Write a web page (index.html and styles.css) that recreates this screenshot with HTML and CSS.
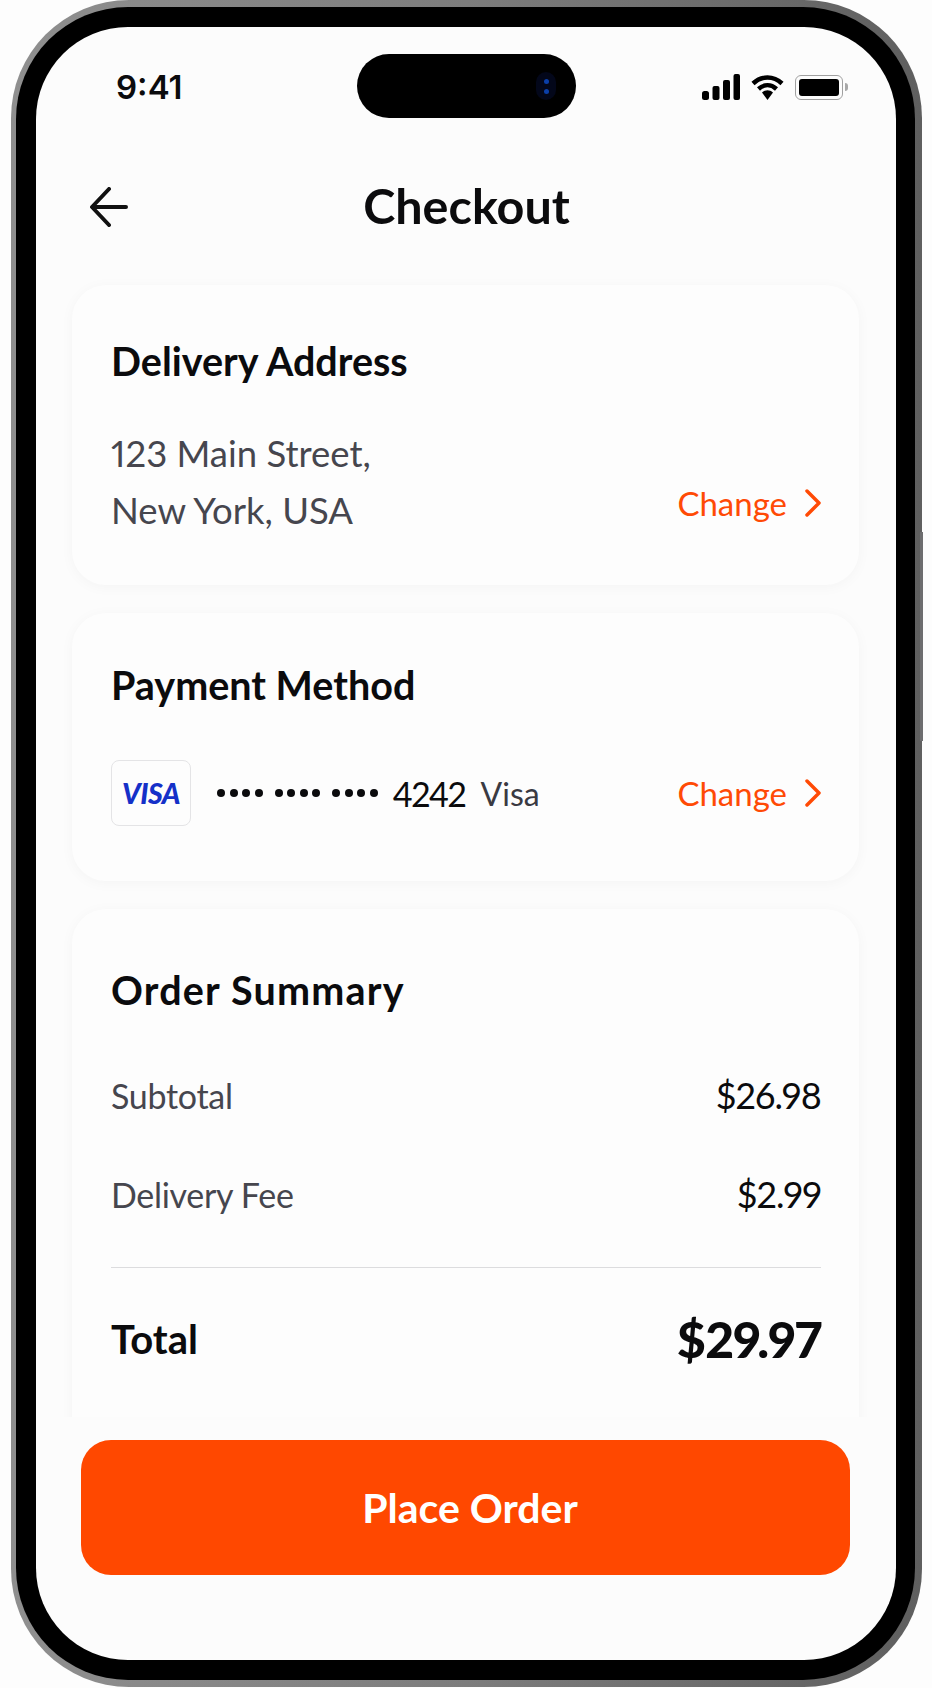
FILE: index.html
```html
<!DOCTYPE html>
<html lang="en">

<head>
  <meta charset="UTF-8" />
  <meta name="viewport" content="width=device-width, initial-scale=1.0" />
  <title>Checkout</title>
  <link rel="stylesheet" href="styles.css">
</head>

<body>
  <div class="phone">
    <span class="side-btn side-right"></span>
    <div class="bezel">
      <div class="screen">
        <div class="island">
          <span class="camera"><i></i><i></i></span>
        </div>

        <div class="status-bar">
          <span class="time">9:41</span>
          <div class="status-icons">
            <svg width="38" height="26" viewBox="0 0 38 26">
              <rect x="0" y="17" width="7" height="9" rx="2.5" />
              <rect x="10.500" y="12" width="7" height="14" rx="2" />
              <rect x="21" y="6" width="7" height="20" rx="2" />
              <rect x="31.500" y="0" width="6.500" height="26" rx="2" />
            </svg>
            <svg width="33" height="27" viewBox="0 0 33 27">
              <path class="wifi-arc" d="M2 9.500C10.500 1.500 22.500 1.500 31 9.500" />
              <path class="wifi-arc" d="M7.500 15C13 10 20 10 25.500 15" />
              <path d="M11 18.500C14.500 15.500 18.500 15.500 22 18.500L16.500 26Z" />
            </svg>
            <div class="battery"><span class="battery-level"></span></div>
          </div>
        </div>

        <header class="top-bar">
          <svg class="back-icon" width="38" height="40" viewBox="0 0 38 40">
            <path d="M19 2L2 20L19 38M2.500 20H36" />
          </svg>
          <h1>Checkout</h1>
        </header>

        <main class="content">
          <section class="card card-address">
            <h2>Delivery Address</h2>
            <div class="card-row row-end">
              <p class="address">123 Main Street,<br>New York, USA</p>
              <a class="change-link" href="#">Change
                <svg width="16" height="28" viewBox="0 0 16 28">
                  <path d="M2 2L14 14L2 26" />
                </svg>
              </a>
            </div>
          </section>

          <section class="card card-payment">
            <h2>Payment Method</h2>
            <div class="card-row">
              <div class="visa-box">VISA</div>
              <div class="dots">
                <span></span><span></span><span></span><span></span>
                <span class="dot-gap"></span>
                <span></span><span></span><span></span><span></span>
                <span class="dot-gap"></span>
                <span></span><span></span><span></span><span></span>
              </div>
              <span class="card-num">4242</span>
              <span class="card-brand">Visa</span>
              <a class="change-link push-right" href="#">Change
                <svg width="16" height="28" viewBox="0 0 16 28">
                  <path d="M2 2L14 14L2 26" />
                </svg>
              </a>
            </div>
          </section>

          <section class="card card-summary">
            <h2>Order Summary</h2>
            <div class="sum-row"><span>Subtotal</span><strong>$26.98</strong></div>
            <div class="sum-row"><span>Delivery Fee</span><strong>$2.99</strong></div>
            <div class="sum-total"><span>Total</span><strong>$29.97</strong></div>
          </section>
        </main>

        <footer class="bottom-bar">
          <button type="button">Place Order</button>
        </footer>
      </div>
    </div>
  </div>
</body>

</html>
```

FILE: styles.css
```css
body {
  margin: 0;
  background-color: #fdfdfd;
  font-family: Lato, 'Noto Sans', sans-serif;
  font-variant-numeric: proportional-nums;
  color: #0b0b0d;
}

.phone {
  position: relative;
  width: 911px;
  height: 1687px;
  margin-left: 11px;
  padding: 7px 7px 7px 5px;
  box-sizing: border-box;
  border-radius: 118px;
  background: linear-gradient(90deg, #8f8f8f, #7d7d7d 50%, #5f5f5f);
}

.side-btn {
  position: absolute;
  width: 3px;
  background-color: #6d6d6f;
}

.side-right {
  top: 532px;
  right: -1px;
  height: 209px;
}

.bezel {
  height: 100%;
  padding: 20px 19px 20px 20px;
  box-sizing: border-box;
  border-radius: 112px;
  background-color: #000;
}

.screen {
  position: relative;
  display: flex;
  flex-direction: column;
  height: 100%;
  border-radius: 92px;
  overflow: hidden;
  background-color: #fcfcfc;
}

.island {
  position: absolute;
  top: 27px;
  left: 321px;
  display: flex;
  align-items: center;
  justify-content: flex-end;
  width: 219px;
  height: 64px;
  padding-right: 20px;
  box-sizing: border-box;
  border-radius: 32px;
  background-color: #000;
}

.camera {
  display: flex;
  flex-direction: column;
  align-items: center;
  justify-content: center;
  gap: 5px;
  width: 20px;
  height: 28px;
  border-radius: 10px;
  background-color: #03071a;
}

.camera i {
  width: 5px;
  height: 5px;
  border-radius: 50%;
  background-color: #0b3fa8;
}

/* status bar */
.status-bar {
  display: flex;
  align-items: center;
  justify-content: space-between;
  height: 120px;
  padding: 0 49px 0 80px;
  flex-shrink: 0;
}

.time {
  font-family: Inter, sans-serif;
  font-size: 33px;
  font-weight: 600;
}

.status-icons {
  display: flex;
  align-items: center;
  gap: 11px;
}

.wifi-arc {
  fill: none;
  stroke: #000;
  stroke-width: 4.500;
}

.battery {
  position: relative;
  width: 48px;
  height: 25px;
  margin-right: 4px;
  padding: 3px;
  box-sizing: border-box;
  border: 1.500px solid #a0a0a0;
  border-radius: 6px;
}

.battery::after {
  content: '';
  position: absolute;
  top: 7px;
  right: -6px;
  width: 3px;
  height: 8px;
  border-radius: 0 3px 3px 0;
  background-color: #a8a8a8;
}

.battery-level {
  display: block;
  height: 100%;
  border-radius: 3px;
  background-color: #000;
}

/* header */
.top-bar {
  display: flex;
  align-items: center;
  justify-content: center;
  position: relative;
  height: 116px;
  padding-bottom: 4px;
  flex-shrink: 0;
}

.back-icon {
  position: absolute;
  left: 54px;
  top: 40px;
  fill: none;
  stroke: #111;
  stroke-width: 4;
  stroke-linecap: round;
  stroke-linejoin: round;
}

h1 {
  margin: 0 0 0 1px;
  font-size: 48.500px;
  font-weight: 700;
}

/* cards */
.content {
  display: flex;
  flex-direction: column;
  gap: 28px;
  flex: 1;
  min-height: 0;
  padding: 18px 37px 0 36px;
  overflow: hidden;
}

.card {
  flex-shrink: 0;
  padding: 0 38px 0 39px;
  box-sizing: border-box;
  border-radius: 34px;
  background-color: #fdfdfd;
  box-shadow: 0 2px 14px rgba(0, 0, 0, 0.035);
}

.card h2 {
  margin: 0;
  font-size: 39.500px;
  font-weight: 700;
  line-height: 44px;
}

.card-address {
  height: 300px;
  padding-top: 54px;
}

.card-payment {
  height: 268px;
  padding-top: 50px;
}

.card-summary {
  height: 580px;
  padding-top: 59px;
}

.card-summary h2 {
  letter-spacing: 1.200px;
}

.card-row {
  display: flex;
  align-items: center;
}

.row-end {
  justify-content: space-between;
  margin-top: 42px;
}

.address {
  margin: 0;
  font-size: 36.500px;
  line-height: 57px;
  color: #46464e;
}

.change-link {
  display: flex;
  align-items: center;
  gap: 18px;
  font-size: 33px;
  color: #ff4a05;
  text-decoration: none;
}

.change-link svg {
  fill: none;
  stroke: #ff4a05;
  stroke-width: 3.500;
  stroke-linecap: round;
  stroke-linejoin: round;
}

.card-address .change-link {
  align-self: flex-end;
  margin-bottom: 16px;
}

.card-payment .card-row {
  margin-top: 53px;
}

.visa-box {
  display: flex;
  align-items: center;
  justify-content: center;
  width: 80px;
  height: 66px;
  margin-right: 26px;
  box-sizing: border-box;
  border: 1.500px solid #e4e4e6;
  border-radius: 8px;
  font-size: 28.500px;
  font-style: italic;
  font-weight: 900;
  letter-spacing: -0.500px;
  color: #1530c8;
}

.dots {
  display: flex;
  align-items: center;
  gap: 4.500px;
  margin-right: 15px;
}

.dots span {
  width: 8px;
  height: 8px;
  border-radius: 50%;
  background-color: #0b0b0d;
}

.dots .dot-gap {
  width: 3px;
  background-color: transparent;
}

.card-num {
  margin-right: 15px;
  font-size: 34px;
  letter-spacing: -1.300px;
}

.card-brand {
  font-size: 32px;
  color: #3a3a42;
}

.push-right {
  margin-left: auto;
}

.sum-row {
  display: flex;
  align-items: center;
  justify-content: space-between;
  height: 40px;
  font-size: 34px;
  letter-spacing: -0.300px;
  color: #46464e;
}

.sum-row strong {
  font-size: 36px;
  font-weight: 400;
  letter-spacing: -0.800px;
  color: #0b0b0d;
}

.card-summary h2 + .sum-row {
  margin-top: 63px;
}

.sum-row + .sum-row {
  margin-top: 59px;
}

.sum-total {
  display: flex;
  align-items: center;
  justify-content: space-between;
  margin-top: 53px;
  padding-top: 42px;
  border-top: 1.500px solid #dcdcde;
  font-size: 40px;
  font-weight: 700;
}

.sum-total strong {
  font-size: 50px;
  line-height: 58px;
  letter-spacing: -1px;
}

/* bottom button */
.bottom-bar {
  flex-shrink: 0;
  padding: 23px 46px 85px 45px;
}

.bottom-bar button {
  display: block;
  width: 100%;
  height: 135px;
  padding-left: 15px;
  border: 0;
  border-radius: 30px;
  background-color: #ff4800;
  font-family: inherit;
  font-size: 41px;
  font-weight: 700;
  color: #fff;
}
```
